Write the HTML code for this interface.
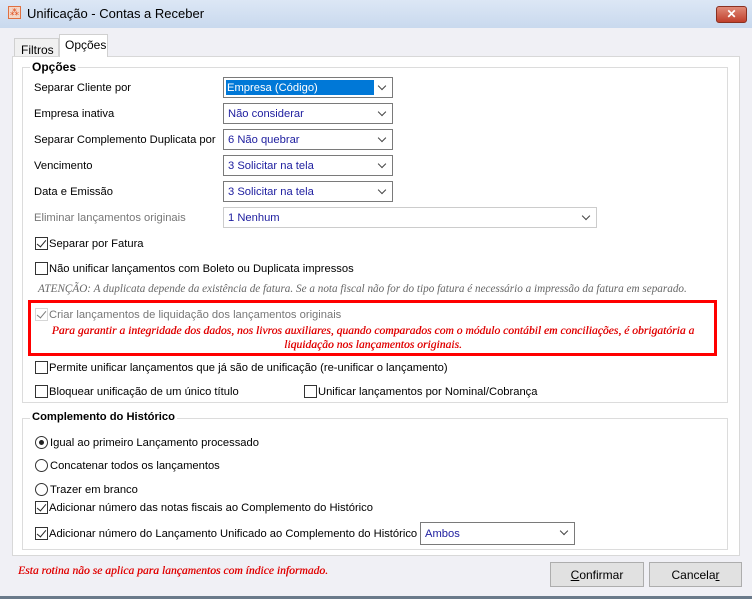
<!DOCTYPE html>
<html><head><meta charset="utf-8"><style>
*{box-sizing:border-box;margin:0;padding:0}
body{width:752px;height:599px;overflow:hidden;background:#f0f0f5;font-family:"Liberation Sans",sans-serif;font-size:11.2px;color:#000;position:relative}
.a{position:absolute;white-space:nowrap}
.t{margin-top:1px}
.combo{position:absolute;height:21px;border:1px solid #7a7a7a;background:#fff;color:#2020a0;padding:4px 0 0 4px;font-size:11.2px}
.combo:after{content:"";position:absolute;right:7px;top:5px;width:5px;height:5px;border-right:1px solid #444;border-bottom:1px solid #444;transform:rotate(45deg)}
.cb{position:absolute;width:13px;height:13px;border:1px solid #333;background:#fff}
.cb.c:after{content:"";position:absolute;left:3px;top:0px;width:4px;height:8px;border-right:1.5px solid #222;border-bottom:1.5px solid #222;transform:rotate(40deg)}
.rb{position:absolute;width:13px;height:13px;border:1px solid #333;border-radius:50%;background:#fff}
.rb.c:after{content:"";position:absolute;left:3px;top:3px;width:5px;height:5px;border-radius:50%;background:#222}
.grp{position:absolute;border:1px solid #dcdcdc}
.red{color:#e00000;font-family:"Liberation Serif",serif;font-style:italic;font-size:11.6px;text-shadow:0.3px 0 0 #e00000}
.btn{position:absolute;height:25px;border:1px solid #adadad;background:#e1e1e1;text-align:center;padding-top:5px;font-size:12px}
</style></head><body>
<div class="a" style="left:0;top:0;width:752px;height:28px;background:linear-gradient(#dce7f5,#c9d9ee)"></div>
<div class="a" style="left:8px;top:6px;width:13px;height:13px;background:#f3d7c8;border:1px solid #e07040;color:#e05020;font-size:9px;line-height:11px;text-align:center">⁂</div>
<div class="a" style="left:27px;top:6px;font-size:13px">Unificação - Contas a Receber</div>
<div class="a" style="left:716px;top:6px;width:31px;height:17px;background:linear-gradient(#e08a78,#c0402c);border:1px solid #8a3020;border-radius:3px;color:#fff;text-align:center;font-weight:bold;font-size:12px;line-height:15px">✕</div>
<div class="a" style="left:14px;top:38px;width:45px;height:19px;border:1px solid #d0d0d0;background:#f0f0f0;padding:4px 0 0 6px;font-size:12px">Filtros</div>
<div class="a" style="left:59px;top:34px;width:49px;height:23px;border:1px solid #d0d0d0;border-bottom:none;background:#fff;padding:3px 0 0 5px;z-index:2;font-size:12px">Opções</div>
<div class="a" style="left:12px;top:56px;width:728px;height:500px;background:#fff;border:1px solid #d8d8d8"></div>
<div class="grp" style="left:22px;top:67px;width:706px;height:336px"></div>
<div class="a" style="left:30px;top:60px;font-weight:bold;background:#fff;padding:0 2px;font-size:12px">Opções</div>
<div class="a t" style="left:34px;top:81px">Separar Cliente por</div>
<div class="combo" style="left:223px;top:77px;width:170px;padding:2px"><span style="background:#0078d7;color:#fff;display:inline-block;width:148px;padding:2px 1px 1px">Empresa (Código)</span></div>
<div class="a t" style="left:34px;top:107px">Empresa inativa</div>
<div class="combo" style="left:223px;top:103px;width:170px">Não considerar</div>
<div class="a t" style="left:34px;top:133px">Separar Complemento Duplicata por</div>
<div class="combo" style="left:223px;top:129px;width:170px">6 Não quebrar</div>
<div class="a t" style="left:34px;top:159px">Vencimento</div>
<div class="combo" style="left:223px;top:155px;width:170px">3 Solicitar na tela</div>
<div class="a t" style="left:34px;top:185px">Data e Emissão</div>
<div class="combo" style="left:223px;top:181px;width:170px">3 Solicitar na tela</div>
<div class="a t" style="left:34px;top:211px;color:#777">Eliminar lançamentos originais</div>
<div class="combo" style="left:223px;top:207px;width:374px;border-color:#ccc">1 Nenhum</div>
<div class="cb c" style="left:35px;top:237px"></div><div class="a t" style="left:49px;top:237px">Separar por Fatura</div>
<div class="cb" style="left:35px;top:262px"></div><div class="a t" style="left:49px;top:262px">Não unificar lançamentos com Boleto ou Duplicata impressos</div>
<div class="a" style="left:38px;top:283px;color:#666;font-family:'Liberation Serif',serif;font-style:italic;font-size:11.2px">ATENÇÃO: A duplicata depende da existência de fatura. Se a nota fiscal não for do tipo fatura é necessário a impressão da fatura em separado.</div>
<div class="a" style="left:28px;top:300px;width:689px;height:56px;border:3px solid #f00"></div>
<div class="cb c" style="left:35px;top:308px;border-color:#bbb;opacity:.6"></div><div class="a t" style="left:49px;top:308px;color:#777">Criar lançamentos de liquidação dos lançamentos originais</div>
<div class="a red" style="left:34px;top:324px;width:678px;text-align:center;white-space:normal;line-height:14px">Para garantir a integridade dos dados, nos livros auxiliares, quando comparados com o módulo contábil em conciliações, é obrigatória a liquidação nos lançamentos originais.</div>
<div class="cb" style="left:35px;top:361px"></div><div class="a t" style="left:49px;top:361px">Permite unificar lançamentos que já são de unificação (re-unificar o lançamento)</div>
<div class="cb" style="left:35px;top:385px"></div><div class="a t" style="left:49px;top:385px">Bloquear unificação de um único título</div>
<div class="cb" style="left:304px;top:385px"></div><div class="a t" style="left:318px;top:385px">Unificar lançamentos por Nominal/Cobrança</div>
<div class="grp" style="left:22px;top:418px;width:706px;height:132px"></div>
<div class="a" style="left:30px;top:411px;font-weight:bold;background:#fff;padding:0 2px">Complemento do Histórico</div>
<div class="rb c" style="left:35px;top:436px"></div><div class="a t" style="left:50px;top:436px">Igual ao primeiro Lançamento processado</div>
<div class="rb" style="left:35px;top:459px"></div><div class="a t" style="left:50px;top:459px">Concatenar todos os lançamentos</div>
<div class="rb" style="left:35px;top:483px"></div><div class="a t" style="left:50px;top:483px">Trazer em branco</div>
<div class="cb c" style="left:35px;top:501px"></div><div class="a t" style="left:49px;top:501px">Adicionar número das notas fiscais ao Complemento do Histórico</div>
<div class="cb c" style="left:35px;top:527px"></div><div class="a t" style="left:49px;top:527px">Adicionar número do Lançamento Unificado ao Complemento do Histórico do</div>
<div class="combo" style="left:420px;top:522px;width:155px;height:23px;padding-top:5px">Ambos</div>
<div class="a red" style="left:18px;top:564px">Esta rotina não se aplica para lançamentos com índice informado.</div>
<div class="btn" style="left:550px;top:562px;width:94px"><u>C</u>onfirmar</div>
<div class="btn" style="left:649px;top:562px;width:93px">Cancela<u>r</u></div>
<div class="a" style="left:0;top:596px;width:752px;height:3px;background:#6a7a8a"></div>
</body></html>
